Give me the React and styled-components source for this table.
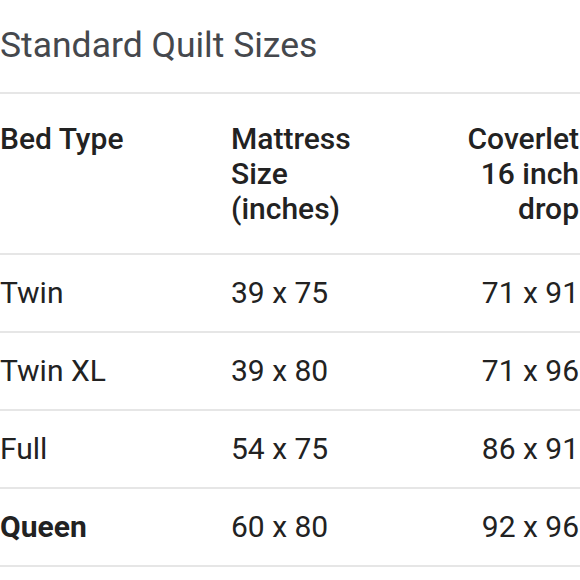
import React from "react";
import styled, { createGlobalStyle } from "styled-components";

const GlobalStyle = createGlobalStyle`
  body {
    margin: 0;
    background: #ffffff;
    font-family: Roboto, "Noto Sans", sans-serif;
  }
`;

const Page = styled.div`
  width: 580px;
  overflow: hidden;
`;

const Title = styled.h2`
  margin: 0;
  padding: 24px 0 0;
  height: 68px;
  font-size: 35.5px;
  line-height: 42px;
  font-weight: 400;
  color: #45484d;
  border-bottom: 2px solid #e6e6e6;
`;

const Row = styled.div`
  display: grid;
  grid-template-columns: 231px 1fr auto;
  padding: ${(p) => (p.head ? "27px 0 27px" : "20px 0 21px")};
  border-bottom: 2px solid #e6e6e6;
  font-size: 30px;
  line-height: 35px;
  color: #222222;
  font-weight: ${(p) => (p.head ? 500 : 400)};
`;

const Cell = styled.div`
  text-align: ${(p) => (p.right ? "right" : "left")};
  font-weight: ${(p) => (p.strong ? 700 : "inherit")};
  margin-right: ${(p) => (p.right ? "1px" : "0")};
`;

const rows = [
  { bed: "Twin", mattress: "39 x 75", coverlet: "71 x 91" },
  { bed: "Twin XL", mattress: "39 x 80", coverlet: "71 x 96" },
  { bed: "Full", mattress: "54 x 75", coverlet: "86 x 91" },
  { bed: "Queen", mattress: "60 x 80", coverlet: "92 x 96", strong: true },
];

const App = () => {
  return (
    <Page>
      <GlobalStyle />
      <Title>Standard Quilt Sizes</Title>
      <Row head>
        <Cell>Bed Type</Cell>
        <Cell>
          Mattress
          <br />
          Size
          <br />
          (inches)
        </Cell>
        <Cell right>
          Coverlet
          <br />
          16 inch
          <br />
          drop
        </Cell>
      </Row>
      {rows.map((r) => (
        <Row key={r.bed}>
          <Cell strong={r.strong}>{r.bed}</Cell>
          <Cell>{r.mattress}</Cell>
          <Cell right>{r.coverlet}</Cell>
        </Row>
      ))}
    </Page>
  );
};

export default App;
